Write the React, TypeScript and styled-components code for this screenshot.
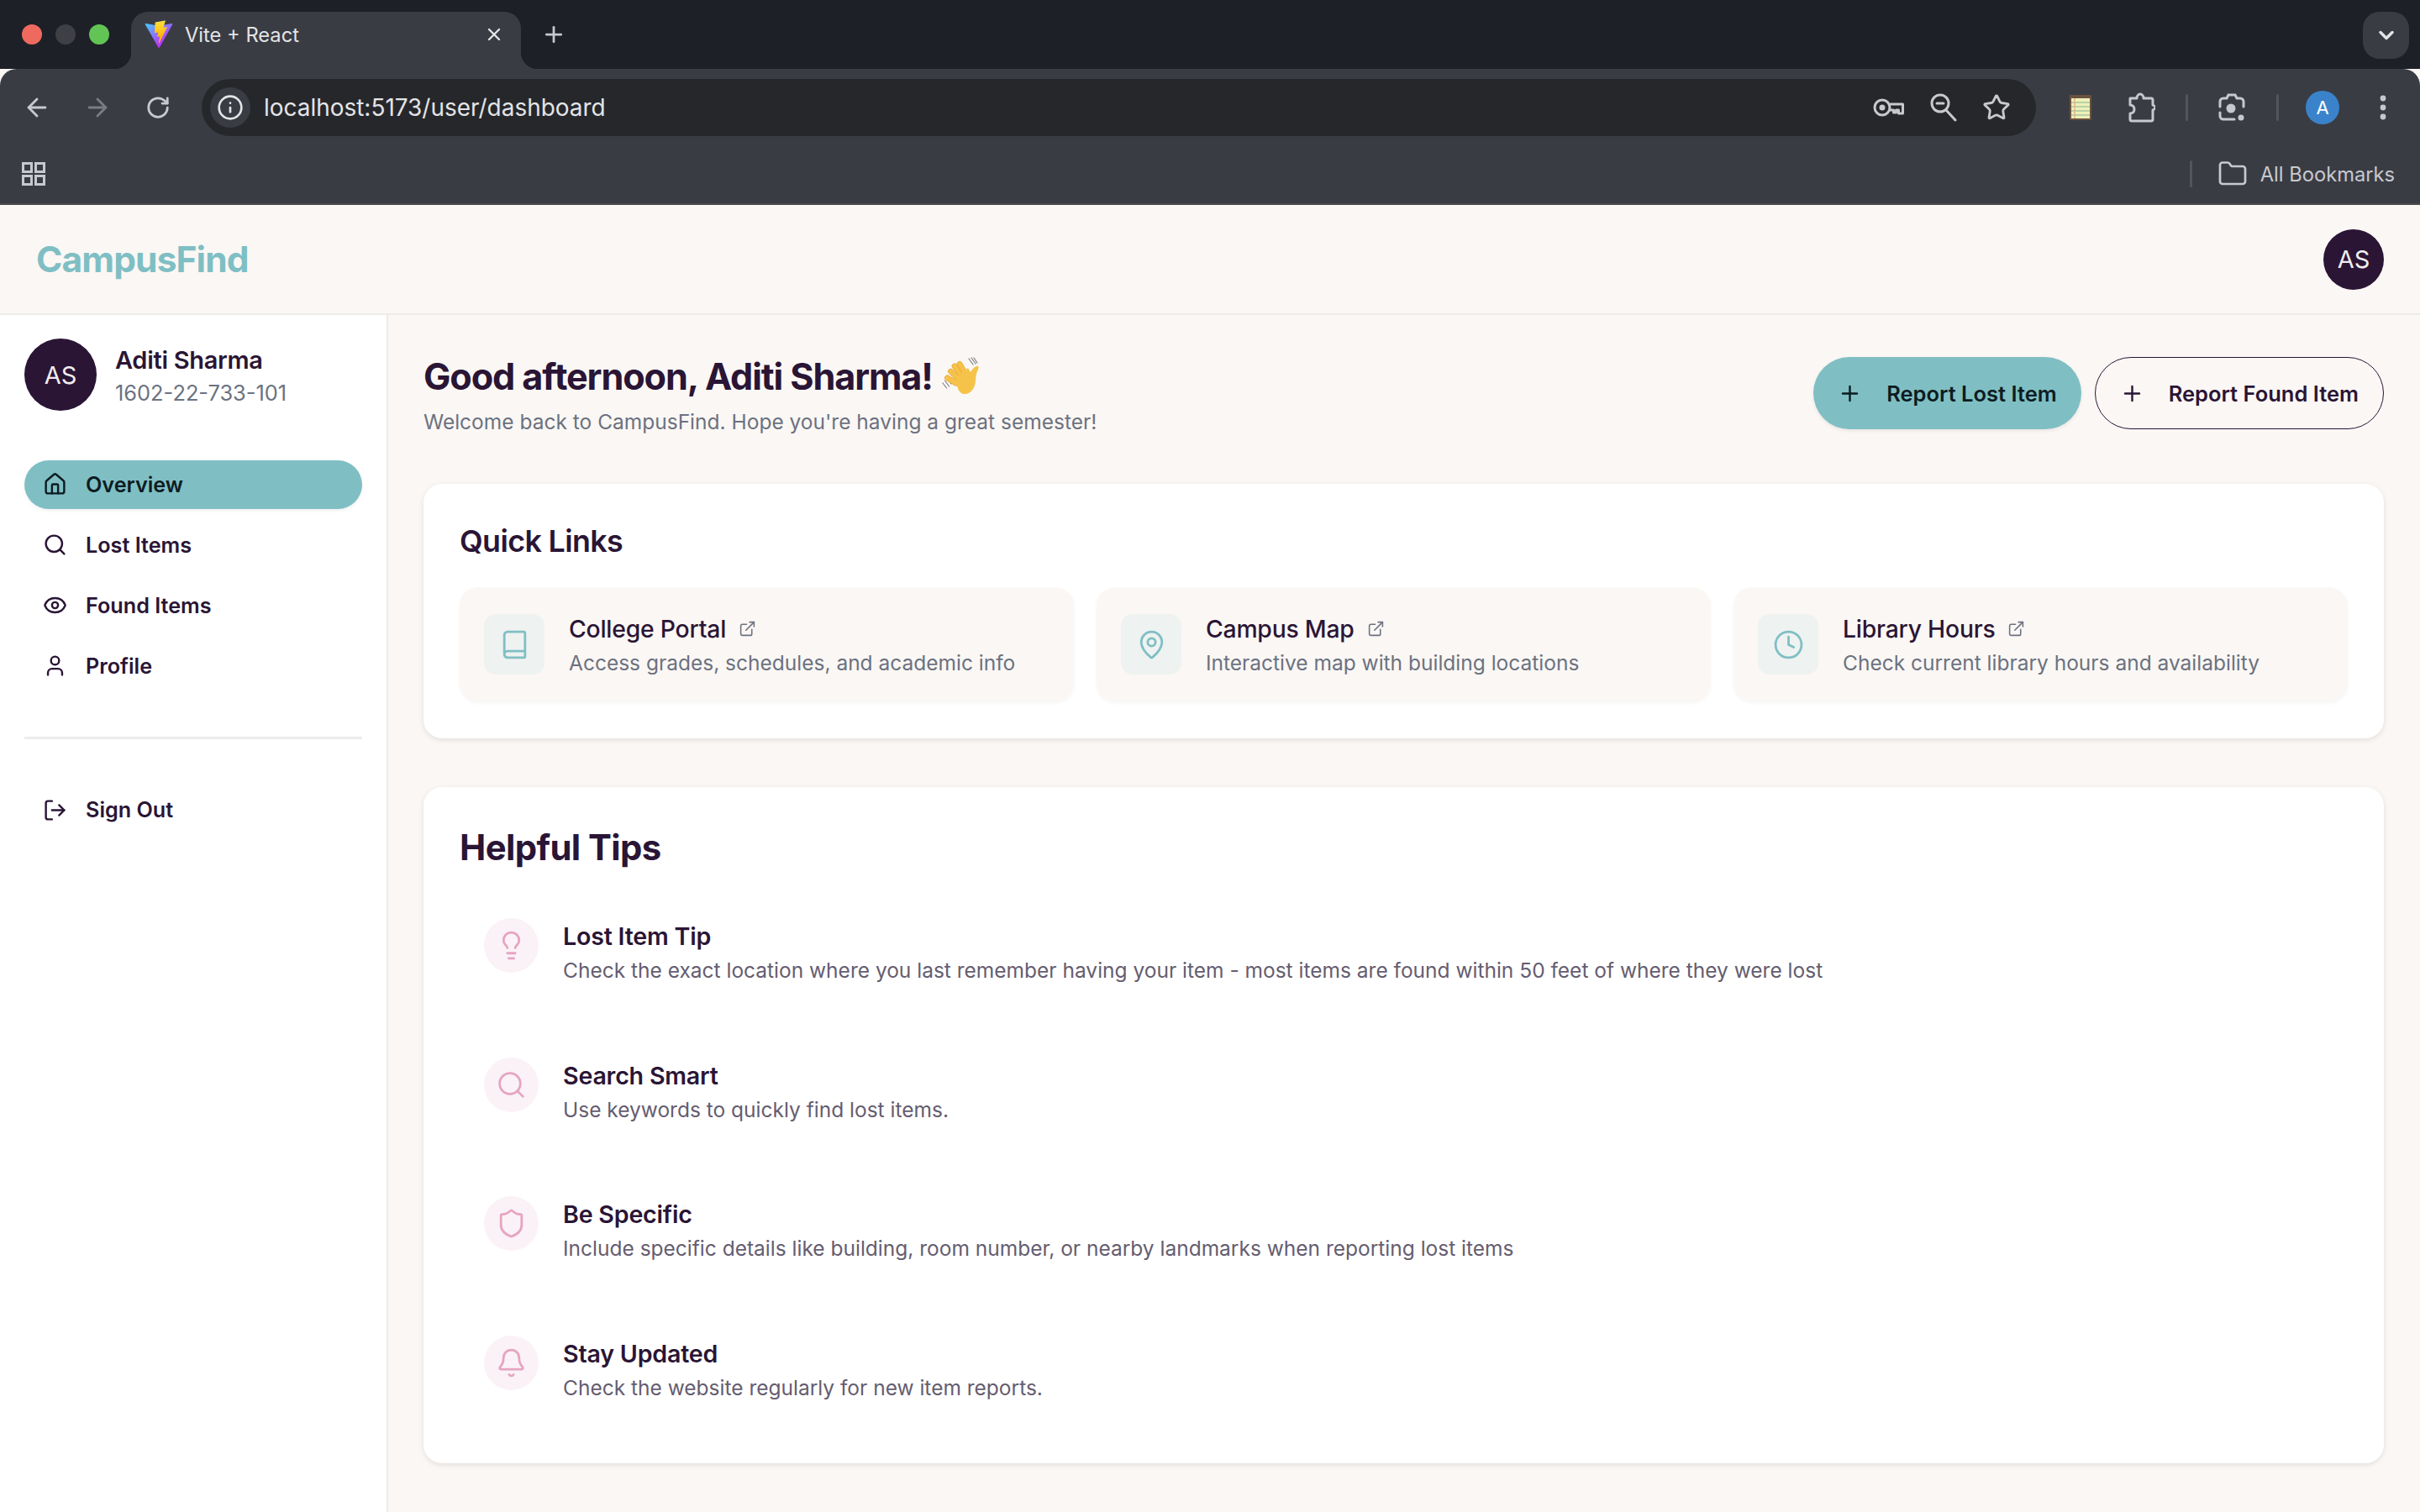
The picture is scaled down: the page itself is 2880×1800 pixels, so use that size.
import React from 'react';
import styled, { createGlobalStyle } from 'styled-components';
import {
  ArrowLeft,
  ArrowRight,
  Bell,
  Book,
  ChevronDown,
  Clock,
  ExternalLink,
  Eye,
  Folder,
  House,
  Info,
  Lightbulb,
  LogOut,
  MapPin,
  Plus,
  RotateCw,
  Search,
  Shield,
  Star,
  User,
  X,
} from 'lucide-react';

const teal = '#7fbfc4';
const ink = '#2a1535';
const grey = '#6b7280';
const pink = '#e6a4c2';
const cream = '#fbf7f4';
const chromeBg = '#3a3c44';

const GlobalStyle = createGlobalStyle`
  html, body {
    margin: 0;
    padding: 0;
    background: ${cream};
  }
  * {
    box-sizing: border-box;
  }
  body {
    font-family: Inter, "Liberation Sans", sans-serif;
    overflow: hidden;
  }
`;

const Page = styled.div`
  width: 2880px;
  height: 1800px;
  display: flex;
  flex-direction: column;
  overflow: hidden;
`;

/* browser chrome */
const TabStrip = styled.div`
  height: 82px;
  background: #1e2028;
  display: flex;
  align-items: flex-start;
  padding: 14px 13px 0 26px;
`;

const Lights = styled.div`
  display: flex;
  gap: 16px;
  padding-top: 15px;
  width: 130px;
`;

const Light = styled.span<{ $color: string }>`
  width: 24px;
  height: 24px;
  border-radius: 50%;
  background: ${(p) => p.$color};
`;

const Tab = styled.div`
  position: relative;
  width: 464px;
  height: 68px;
  background: ${chromeBg};
  border-radius: 20px 20px 0 0;
  display: flex;
  align-items: center;
  padding: 0 20px 14px 16px;
  color: #e3e4e7;
  font-size: 24px;

  &::before,
  &::after {
    content: '';
    position: absolute;
    bottom: 0;
    width: 20px;
    height: 20px;
  }
  &::before {
    left: -20px;
    background: radial-gradient(circle at 0 0, #1e2028 20px, ${chromeBg} 20.5px);
  }
  &::after {
    right: -20px;
    background: radial-gradient(circle at 100% 0, #1e2028 20px, ${chromeBg} 20.5px);
  }
`;

const TabTitle = styled.span`
  margin-left: 14px;
  flex: 1;
  font-size: 23.7px;
`;

const NewTab = styled.div`
  margin: 12px 0 0 24px;
  color: #c6c8d0;
  display: flex;
  flex: 1;
`;

const TabMenu = styled.div`
  width: 55px;
  height: 56px;
  border-radius: 20px;
  background: ${chromeBg};
  color: #e3e4e7;
  display: flex;
  align-items: center;
  justify-content: center;
`;

const Toolbar = styled.div`
  height: 92px;
  background: ${chromeBg};
  border-radius: 20px 20px 0 0;
  display: flex;
  align-items: center;
  padding: 0 0 0 26px;
  color: #c8c9cd;
`;

const NavButton = styled.span<{ $dim?: boolean }>`
  width: 36px;
  height: 36px;
  margin-right: 36px;
  display: flex;
  align-items: center;
  justify-content: center;
  color: ${(p) => (p.$dim ? '#7b7c82' : '#c8c9cd')};
`;

const AddressBar = styled.div`
  width: 2183px;
  height: 68px;
  flex-shrink: 0;
  margin-left: -2px;
  background: #26272b;
  border-radius: 34px;
  display: flex;
  align-items: center;
  padding: 0 30px 0 10px;
`;

const InfoBadge = styled.span`
  width: 48px;
  height: 48px;
  border-radius: 50%;
  background: ${chromeBg};
  color: #e3e4e7;
  display: flex;
  align-items: center;
  justify-content: center;
`;

const Url = styled.span`
  margin-left: 16px;
  flex: 1;
  font-size: 27.95px;
  color: #e3e4e7;
`;

const AddressIcons = styled.div`
  display: flex;
  align-items: center;
  gap: 30px;
  color: #c8c9cd;
`;

const Extensions = styled.div`
  display: flex;
  align-items: center;
  color: #c6c8d0;
`;

const ExtensionSlot = styled.span<{ $left: number }>`
  display: flex;
  align-items: center;
  margin-left: ${(p) => p.$left}px;
`;

const Separator = styled.span`
  width: 3px;
  height: 32px;
  border-radius: 2px;
  background: #53555d;
`;

const ChromeAvatar = styled.span`
  width: 40px;
  height: 40px;
  border-radius: 50%;
  background: #3a83cb;
  color: #fff;
  font-size: 22px;
  display: flex;
  align-items: center;
  justify-content: center;
`;

const BookmarksBar = styled.div`
  height: 70px;
  background: ${chromeBg};
  border-bottom: 2px solid #4b4a4a;
  display: flex;
  align-items: center;
  padding: 0 30px 2px 26px;
  color: #c8c9cd;
`;

const BookmarksSpacer = styled.span`
  flex: 1;
`;

const BookmarksLabel = styled.span`
  font-size: 23.7px;
  margin-left: 15px;
`;

const FolderSlot = styled.span`
  display: flex;
  margin-left: 30px;
`;

/* app */
const Header = styled.header`
  height: 131px;
  background: ${cream};
  border-bottom: 2px solid #ececea;
  display: flex;
  align-items: center;
  justify-content: space-between;
  padding: 0 43px 0 43px;
`;

const Logo = styled.div`
  font-size: 42.5px;
  font-weight: 700;
  letter-spacing: -0.9px;
  color: ${teal};
`;

const Avatar = styled.div<{ $size: number }>`
  width: ${(p) => p.$size}px;
  height: ${(p) => p.$size}px;
  border-radius: 50%;
  flex-shrink: 0;
  background: ${ink};
  color: #f1ecee;
  font-size: 29px;
  display: flex;
  align-items: center;
  justify-content: center;
`;

const Body = styled.div`
  flex: 1;
  display: flex;
  min-height: 0;
`;

const Sidebar = styled.aside`
  width: 462px;
  flex-shrink: 0;
  background: #fff;
  border-right: 2px solid #ececea;
  padding: 28px 29px;
`;

const Profile = styled.div`
  display: flex;
  align-items: center;
  gap: 22px;
  margin-bottom: 59px;
`;

const ProfileText = styled.div`
  padding-top: 4px;
`;

const ProfileName = styled.div`
  font-size: 29px;
  font-weight: 600;
  letter-spacing: -0.3px;
  line-height: 39px;
  color: ${ink};
`;

const ProfileId = styled.div`
  font-size: 25.4px;
  line-height: 39px;
  color: ${grey};
`;

const NavList = styled.nav`
  display: flex;
  flex-direction: column;
  gap: 14.5px;
`;

const NavItem = styled.a<{ $active?: boolean }>`
  height: 57.5px;
  border-radius: 29px;
  display: flex;
  align-items: center;
  gap: 22px;
  padding-left: 22px;
  font-size: 25.2px;
  font-weight: 600;
  color: ${(p) => (p.$active ? '#0d1c22' : ink)};
  background: ${(p) => (p.$active ? teal : 'transparent')};
  box-shadow: ${(p) => (p.$active ? '0 2px 4px rgba(0,0,0,0.06)' : 'none')};
`;

const NavRule = styled.hr`
  border: 0;
  height: 3px;
  background: #ececec;
  margin: 55px 0 56px;
`;

const Main = styled.main`
  flex: 1;
  min-width: 0;
  padding: 50px 43px 0 42px;
`;

const Greeting = styled.div`
  display: flex;
  justify-content: space-between;
  align-items: flex-start;
  margin-bottom: 55px;
`;

const Title = styled.h1`
  margin: -2px 0 0;
  display: flex;
  align-items: center;
  gap: 10px;
  font-size: 43.2px;
  line-height: 48px;
  font-weight: 700;
  letter-spacing: -1.1px;
  color: ${ink};
`;

const Subtitle = styled.p`
  margin: 10px 0 0;
  font-size: 24.5px;
  line-height: 38px;
  color: ${grey};
`;

const Actions = styled.div`
  display: flex;
  gap: 16px;
`;

const ActionButton = styled.button<{ $primary?: boolean }>`
  height: 86px;
  border-radius: 43px;
  display: flex;
  align-items: center;
  gap: 29px;
  padding: 0 29px;
  font-family: inherit;
  font-size: 25.5px;
  font-weight: 600;
  color: ${(p) => (p.$primary ? '#0d1c22' : ink)};
  background: ${(p) => (p.$primary ? teal : 'transparent')};
  border: ${(p) => (p.$primary ? '0' : `1.5px solid ${ink}`)};
  box-shadow: ${(p) => (p.$primary ? '0 2px 4px rgba(0,0,0,0.08)' : 'none')};
`;

const Card = styled.section<{ $tips?: boolean }>`
  background: #fff;
  border-radius: 22px;
  box-shadow: 0 2px 6px rgba(0, 0, 0, 0.1);
  padding: ${(p) => (p.$tips ? '44px 43px 70px' : '44px 43px 44px')};
  margin-bottom: 58px;
`;

const SectionTitle = styled.h2<{ $large?: boolean }>`
  margin: 0;
  font-size: ${(p) => (p.$large ? '41.8px' : '35.8px')};
  line-height: ${(p) => (p.$large ? '56px' : '48px')};
  font-weight: ${(p) => (p.$large ? 700 : 600)};
  letter-spacing: -0.6px;
  color: ${ink};
`;

const LinkGrid = styled.div`
  display: grid;
  grid-template-columns: repeat(3, 1fr);
  gap: 27px;
  margin-top: 31px;
`;

const LinkCard = styled.a`
  height: 136px;
  background: ${cream};
  border-radius: 22px;
  box-shadow: 0 2px 4px rgba(0, 0, 0, 0.04);
  display: flex;
  align-items: center;
  gap: 29px;
  padding: 0 29px;
`;

const LinkIcon = styled.span`
  width: 72px;
  height: 72px;
  border-radius: 14px;
  background: #eef2f1;
  color: ${teal};
  display: flex;
  align-items: center;
  justify-content: center;
  flex-shrink: 0;
`;

const LinkBody = styled.div`
  padding-top: 3px;
`;

const LinkTitle = styled.div`
  display: flex;
  align-items: center;
  gap: 15px;
  font-size: 28.3px;
  line-height: 40px;
  font-weight: 500;
  letter-spacing: -0.2px;
  color: ${ink};

  svg {
    color: ${grey};
  }
`;

const LinkText = styled.div`
  font-size: 24.5px;
  line-height: 40px;
  color: ${grey};
`;

const TipList = styled.div`
  display: flex;
  flex-direction: column;
  gap: 83.5px;
  margin-top: 56px;
  padding-left: 29px;
`;

const Tip = styled.div`
  display: flex;
  gap: 29px;
`;

const TipIcon = styled.span`
  width: 65px;
  height: 65px;
  border-radius: 50%;
  background: #faf2f6;
  color: ${pink};
  display: flex;
  align-items: center;
  justify-content: center;
  flex-shrink: 0;
`;

const TipTitle = styled.div`
  font-size: 28.6px;
  line-height: 40px;
  margin-top: 2px;
  font-weight: 600;
  letter-spacing: -0.2px;
  color: ${ink};
`;

const TipText = styled.div`
  font-size: 24.5px;
  line-height: 40px;
  color: #655d70;
`;

function ViteLogo() {
  return (
    <svg width="34" height="34" viewBox="0 0 410 404" fill="none">
      <path
        d="M399.641 59.5246L215.643 388.545C211.844 395.338 202.084 395.378 198.228 388.618L10.5817 59.5563C6.38087 52.1896 12.6802 43.2665 21.0281 44.7586L205.223 77.6824C206.398 77.8924 207.601 77.8904 208.776 77.6763L389.119 44.8058C397.439 43.2894 403.768 52.1434 399.641 59.5246Z"
        fill="url(#viteA)"
      />
      <path
        d="M292.965 1.5744L156.801 28.2552C154.563 28.6937 152.906 30.5903 152.771 32.8664L144.395 174.33C144.198 177.662 147.258 180.248 150.51 179.498L188.42 170.749C191.967 169.931 195.172 173.055 194.443 176.622L183.18 231.775C182.422 235.487 185.907 238.661 189.532 237.56L212.947 230.446C216.577 229.344 220.065 232.527 219.297 236.242L201.398 322.875C200.278 328.294 207.486 331.249 210.492 326.603L212.5 323.5L323.454 102.072C325.312 98.3645 322.108 94.137 318.036 94.9228L279.014 102.454C275.347 103.161 272.227 99.746 273.262 96.1583L298.731 7.86689C299.767 4.27314 296.636 0.855181 292.965 1.5744Z"
        fill="url(#viteB)"
      />
      <defs>
        <linearGradient id="viteA" x1="6" y1="33" x2="235" y2="344" gradientUnits="userSpaceOnUse">
          <stop stopColor="#41D1FF" />
          <stop offset="1" stopColor="#BD34FE" />
        </linearGradient>
        <linearGradient id="viteB" x1="194" y1="8" x2="236" y2="292" gradientUnits="userSpaceOnUse">
          <stop stopColor="#FFEA83" />
          <stop offset="0.08" stopColor="#FFDD35" />
          <stop offset="1" stopColor="#FFA800" />
        </linearGradient>
      </defs>
    </svg>
  );
}

function KeyIcon() {
  return (
    <svg width="38" height="24" viewBox="0 0 38 24" fill="none" stroke="currentColor" strokeWidth="3">
      <circle cx="11" cy="12" r="9" />
      <circle cx="11" cy="12" r="3.5" fill="currentColor" stroke="none" />
      <path d="M20 8h15.5v11h-5v-4h-3v3h-3v-3h-4.5" strokeLinejoin="round" />
    </svg>
  );
}

function ZoomIcon() {
  return (
    <svg width="32" height="34" viewBox="0 0 32 34" fill="none" stroke="currentColor" strokeWidth="3" strokeLinecap="round">
      <circle cx="12" cy="12" r="10" />
      <path d="M8 12h8" />
      <path d="M19 20l11 12" />
    </svg>
  );
}

function NotepadIcon() {
  return (
    <svg width="26" height="30" viewBox="0 0 26 30">
      <rect width="26" height="30" rx="1" fill="#6a5240" />
      <rect x="2" y="4" width="22" height="24" fill="#eef0b8" />
      <path d="M2 9h22M2 14h22M2 19h22M2 24h22" stroke="#a9c8a0" strokeWidth="1.5" />
      <path d="M6 4v24" stroke="#e6b48c" strokeWidth="1.5" />
    </svg>
  );
}

function PuzzleIcon() {
  return (
    <svg width="32" height="36" viewBox="0 0 32 36" fill="none" stroke="currentColor" strokeWidth="3" strokeLinejoin="round">
      <path d="M2 7h8c0-3 2-5 4-5s4 2 4 5h9a2 2 0 0 1 2 2v6c2 1 3 2 3 3s-1 2-3 3v11a2 2 0 0 1-2 2H4a2 2 0 0 1-2-2v-7c3 0 5-2 5-5s-2-5-5-5V7z" />
    </svg>
  );
}

function LensIcon() {
  return (
    <svg width="32" height="36" viewBox="0 0 32 36" fill="none" stroke="currentColor" strokeWidth="3" strokeLinecap="round">
      <path d="M2 17v-6a4 4 0 0 1 4-4h4l2-4h8l2 4h4a4 4 0 0 1 4 4v6" />
      <path d="M2 24v4a4 4 0 0 0 4 4h13" />
      <circle cx="15" cy="19" r="5.5" fill="currentColor" stroke="none" />
      <circle cx="27" cy="30" r="3.5" fill="currentColor" stroke="none" />
    </svg>
  );
}

function DotsIcon() {
  return (
    <svg width="8" height="30" viewBox="0 0 8 30" fill="currentColor">
      <circle cx="4" cy="4" r="3.4" />
      <circle cx="4" cy="15" r="3.4" />
      <circle cx="4" cy="26" r="3.4" />
    </svg>
  );
}

function GridIcon() {
  return (
    <svg width="28" height="28" viewBox="0 0 28 28" fill="none" stroke="currentColor" strokeWidth="3">
      <rect x="1.5" y="1.5" width="10" height="10" />
      <rect x="16.5" y="1.5" width="10" height="10" />
      <rect x="1.5" y="16.5" width="10" height="10" />
      <rect x="16.5" y="16.5" width="10" height="10" />
    </svg>
  );
}

function WaveHand() {
  return (
    <svg width="50" height="50" viewBox="0 0 50 50" fill="none">
      <path d="M7 27l5 7M4.5 30l5 7M2 33l4.500 6" stroke="#7f7f86" strokeWidth="1.200" strokeLinecap="round" />
      <path d="M33 4l5 7M36 3l5 7M39 3l4 6" stroke="#7f7f86" strokeWidth="1.200" strokeLinecap="round" />
      <g fill="#f6c34a" stroke="#e8a52c" strokeWidth="0.800">
        <rect x="18.500" y="8" width="6" height="24" rx="3" transform="rotate(-38 21.500 20)" />
        <rect x="24" y="6" width="6" height="26" rx="3" transform="rotate(-30 27 19)" />
        <rect x="13.500" y="14" width="6" height="21" rx="3" transform="rotate(-46 16.500 24)" />
        <rect x="9.500" y="21" width="6" height="18" rx="3" transform="rotate(-58 12.500 30)" />
      </g>
      <path
        d="M17 27l15-12 3 5c1-2 4-6 7-7 3-1 3 2 2 4-2 4-3 8-3 13 0 8-6 17-14 16-6-1-8-7-10-19z"
        fill="#f6c34a"
      />
    </svg>
  );
}

const links = [
  { title: 'College Portal', text: 'Access grades, schedules, and academic info', icon: Book },
  { title: 'Campus Map', text: 'Interactive map with building locations', icon: MapPin },
  { title: 'Library Hours', text: 'Check current library hours and availability', icon: Clock },
];

const tips = [
  {
    title: 'Lost Item Tip',
    text: 'Check the exact location where you last remember having your item - most items are found within 50 feet of where they were lost',
    icon: Lightbulb,
  },
  { title: 'Search Smart', text: 'Use keywords to quickly find lost items.', icon: Search },
  {
    title: 'Be Specific',
    text: 'Include specific details like building, room number, or nearby landmarks when reporting lost items',
    icon: Shield,
  },
  { title: 'Stay Updated', text: 'Check the website regularly for new item reports.', icon: Bell },
];

const navItems = [
  { label: 'Overview', icon: House, active: true },
  { label: 'Lost Items', icon: Search },
  { label: 'Found Items', icon: Eye },
  { label: 'Profile', icon: User },
];

export default function App() {
  return (
    <Page>
      <GlobalStyle />
      <TabStrip>
        <Lights>
          <Light $color="#ee6a5f" />
          <Light $color="#3f4045" />
          <Light $color="#61c454" />
        </Lights>
        <Tab>
          <ViteLogo />
          <TabTitle>Vite + React</TabTitle>
          <X size={24} strokeWidth={2.4} />
        </Tab>
        <NewTab>
          <Plus size={30} strokeWidth={2.2} />
        </NewTab>
        <TabMenu>
          <ChevronDown size={28} strokeWidth={3} />
        </TabMenu>
      </TabStrip>

      <Toolbar>
        <NavButton>
          <ArrowLeft size={34} strokeWidth={2} />
        </NavButton>
        <NavButton $dim>
          <ArrowRight size={34} strokeWidth={2} />
        </NavButton>
        <NavButton>
          <RotateCw size={30} strokeWidth={2.2} />
        </NavButton>
        <AddressBar>
          <InfoBadge>
            <Info size={32} strokeWidth={2} />
          </InfoBadge>
          <Url>localhost:5173/user/dashboard</Url>
          <AddressIcons>
            <KeyIcon />
            <ZoomIcon />
            <Star size={34} strokeWidth={2} />
          </AddressIcons>
        </AddressBar>
        <Extensions>
          <ExtensionSlot $left={40}>
            <NotepadIcon />
          </ExtensionSlot>
          <ExtensionSlot $left={44}>
            <PuzzleIcon />
          </ExtensionSlot>
          <ExtensionSlot $left={36}>
            <Separator />
          </ExtensionSlot>
          <ExtensionSlot $left={36}>
            <LensIcon />
          </ExtensionSlot>
          <ExtensionSlot $left={37}>
            <Separator />
          </ExtensionSlot>
          <ExtensionSlot $left={32}>
            <ChromeAvatar>A</ChromeAvatar>
          </ExtensionSlot>
          <ExtensionSlot $left={48}>
            <DotsIcon />
          </ExtensionSlot>
        </Extensions>
      </Toolbar>

      <BookmarksBar>
        <GridIcon />
        <BookmarksSpacer />
        <Separator />
        <FolderSlot>
          <Folder size={36} strokeWidth={1.8} />
        </FolderSlot>
        <BookmarksLabel>All Bookmarks</BookmarksLabel>
      </BookmarksBar>

      <Header>
        <Logo>CampusFind</Logo>
        <Avatar $size={72}>AS</Avatar>
      </Header>

      <Body>
        <Sidebar>
          <Profile>
            <Avatar $size={86}>AS</Avatar>
            <ProfileText>
              <ProfileName>Aditi Sharma</ProfileName>
              <ProfileId>1602-22-733-101</ProfileId>
            </ProfileText>
          </Profile>
          <NavList>
            {navItems.map((item) => (
              <NavItem key={item.label} $active={item.active}>
                <item.icon size={29} strokeWidth={2} />
                {item.label}
              </NavItem>
            ))}
          </NavList>
          <NavRule />
          <NavItem>
            <LogOut size={29} strokeWidth={2} />
            Sign Out
          </NavItem>
        </Sidebar>

        <Main>
          <Greeting>
            <div>
              <Title>
                Good afternoon, Aditi Sharma!
                <WaveHand />
              </Title>
              <Subtitle>Welcome back to CampusFind. Hope you're having a great semester!</Subtitle>
            </div>
            <Actions>
              <ActionButton $primary>
                <Plus size={29} strokeWidth={2} />
                Report Lost Item
              </ActionButton>
              <ActionButton>
                <Plus size={29} strokeWidth={2} />
                Report Found Item
              </ActionButton>
            </Actions>
          </Greeting>

          <Card>
            <SectionTitle>Quick Links</SectionTitle>
            <LinkGrid>
              {links.map((link) => (
                <LinkCard key={link.title}>
                  <LinkIcon>
                    <link.icon size={37} strokeWidth={1.8} />
                  </LinkIcon>
                  <LinkBody>
                    <LinkTitle>
                      {link.title}
                      <ExternalLink size={21} strokeWidth={1.8} />
                    </LinkTitle>
                    <LinkText>{link.text}</LinkText>
                  </LinkBody>
                </LinkCard>
              ))}
            </LinkGrid>
          </Card>

          <Card $tips>
            <SectionTitle $large>Helpful Tips</SectionTitle>
            <TipList>
              {tips.map((tip) => (
                <Tip key={tip.title}>
                  <TipIcon>
                    <tip.icon size={37} strokeWidth={1.8} />
                  </TipIcon>
                  <div>
                    <TipTitle>{tip.title}</TipTitle>
                    <TipText>{tip.text}</TipText>
                  </div>
                </Tip>
              ))}
            </TipList>
          </Card>
        </Main>
      </Body>
    </Page>
  );
}
